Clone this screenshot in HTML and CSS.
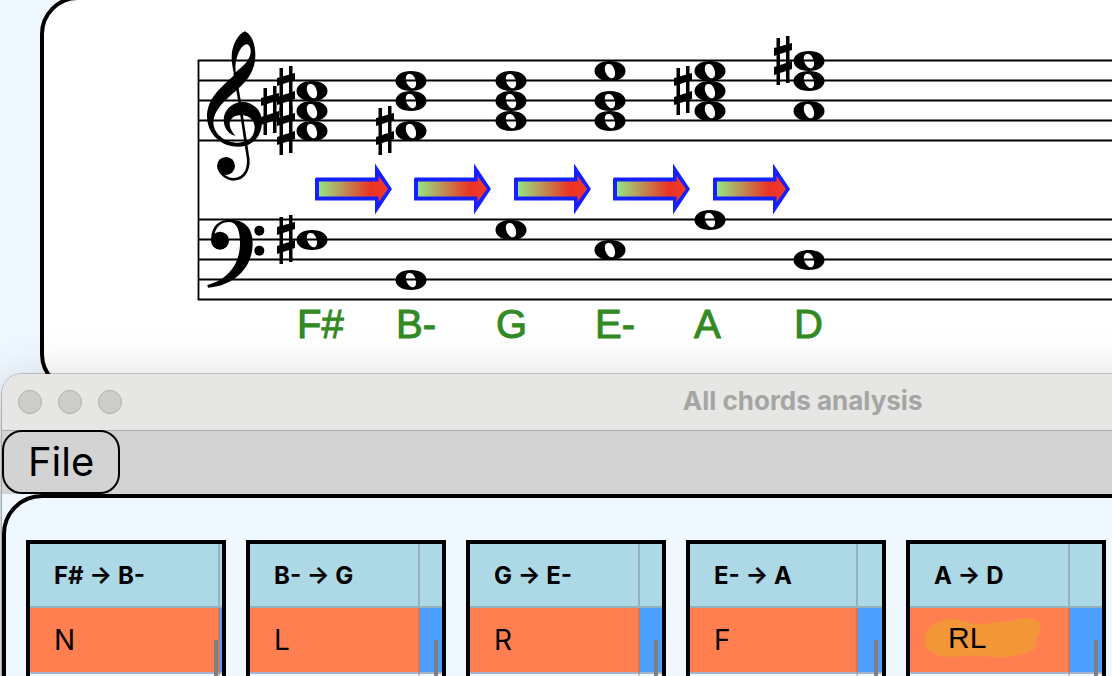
FILE: index.html
```html
<!DOCTYPE html>
<html lang="en">
<head>
    <meta charset="UTF-8">
    <meta name="viewport" content="width=device-width, initial-scale=1.0">
    <title>All chords analysis</title>
    <link rel="stylesheet" href="styles.css">
</head>
<body>
    <section class="score">
        <svg class="staff" width="1552" height="388" viewBox="44 0 1552 388" role="img" aria-label="Chord progression">
            <defs>
                <linearGradient id="fade">
                    <stop offset="0" stop-color="#94e584"/>
                    <stop offset="0.75" stop-color="#ea3323"/>
                    <stop offset="1" stop-color="#f5392b"/>
                </linearGradient>
                <path id="note" fill-rule="evenodd" d="M-15.500 0C-15.500-6-9-10 0-10S15.500-6 15.500 0 9 10 0 10-15.500 6-15.500 0ZM-2-7C-5.500-6.500-6-2-4 2.500-2 6.500 1 8 3 7 6 5.500 5.500 0 3.500-3.500 2-6.500 0-7.500-2-7Z"/>
                <path id="sharp" d="M-6.500-23h3.500v47h-3.500ZM3-25h3.500v47h-3.500ZM-9-8.500V-13L9-18V-11L-9-5ZM-9 6 9 0v8L-9 14Z"/>
                <g id="arrow">
                    <path fill="#1420ff" d="M316 177.500H375V163.500L392 189 375 214.500V200.500H315V178.500Z"/>
                    <path fill="url(#fade)" d="M319 181.500H378.500V176L388 189 378.500 202V196.500H319Z"/>
                </g>
            </defs>

            <!-- staff lines -->
            <g stroke="#000" stroke-width="1.800" fill="none">
                <path d="M198 60.500H1600M198 80.500H1600M198 100.500H1600M198 120.500H1600M198 140.500H1600"/>
                <path d="M198 219.500H1600M198 239.500H1600M198 259.500H1600M198 279.500H1600M198 299.500H1600"/>
                <path d="M198.500 60V300"/>
            </g>

            <!-- treble clef -->
            <g transform="translate(190 20) scale(.3333)">
                <path fill-rule="evenodd" d="M165 34C145 42 124 75 125 115C126 135 129 150 133 165C90 205 52 235 51 290C53 345 95 380 145 380C190 380 216 345 216 305C216 272 190 246 158 246C125 246 101 272 101 300C102 325 115 342 136 348C128 337 119 325 119 312C119 295 135 285 155 285C180 287 194 302 194 322C194 350 175 368 145 368C102 368 70 340 70 305C72 270 105 240 138 212C175 180 196 150 196 105C196 70 185 45 165 34ZM137 157C133 120 150 75 170 73C182 75 186 95 178 112C168 135 150 145 137 157Z"/>
                <path fill="none" stroke="#000" stroke-width="8" d="M134 160L148 240L172 400C182 445 165 478 130 478C112 478 95 465 88 450"/>
                <circle cx="108" cy="438" r="27"/>
            </g>

            <!-- bass clef -->
            <g transform="translate(190 160) scale(.3333)">
                <path d="M64 240C62 200 85 179 120 179C165 179 188 205 188 250C188 325 130 378 54 383L52 375C115 360 150 310 150 250C150 215 142 186 118 186C95 186 78 198 73 225Z"/>
                <circle cx="90" cy="242" r="27"/>
                <circle cx="208" cy="212" r="15"/>
                <circle cx="208" cy="272" r="15"/>
            </g>

            <!-- F# -->
            <use href="#sharp" x="286" y="91"/>
            <use href="#sharp" x="270" y="111"/>
            <use href="#sharp" x="286" y="131"/>
            <use href="#note" x="312" y="91"/>
            <use href="#note" x="312" y="111"/>
            <use href="#note" x="312" y="131"/>
            <use href="#sharp" x="286" y="240"/>
            <use href="#note" x="312" y="240"/>

            <!-- B- -->
            <use href="#sharp" x="385" y="131"/>
            <use href="#note" x="411" y="81"/>
            <use href="#note" x="411" y="101"/>
            <use href="#note" x="411" y="131"/>
            <use href="#note" x="411" y="280"/>

            <!-- G -->
            <use href="#note" x="511" y="81"/>
            <use href="#note" x="511" y="101"/>
            <use href="#note" x="511" y="121"/>
            <use href="#note" x="511" y="230"/>

            <!-- E- -->
            <use href="#note" x="610" y="71"/>
            <use href="#note" x="610" y="101"/>
            <use href="#note" x="610" y="121"/>
            <use href="#note" x="610" y="250"/>

            <!-- A -->
            <use href="#sharp" x="683" y="91"/>
            <use href="#note" x="710" y="71"/>
            <use href="#note" x="710" y="91"/>
            <use href="#note" x="710" y="111"/>
            <use href="#note" x="710" y="220"/>

            <!-- D -->
            <use href="#sharp" x="783" y="61"/>
            <use href="#note" x="809" y="61"/>
            <use href="#note" x="809" y="81"/>
            <use href="#note" x="809" y="111"/>
            <use href="#note" x="809" y="260"/>

            <use href="#arrow"/>
            <use href="#arrow" x="99"/>
            <use href="#arrow" x="199"/>
            <use href="#arrow" x="298"/>
            <use href="#arrow" x="398"/>

            <g class="chord-names">
                <text x="297" y="338">F#</text>
                <text x="396" y="338">B-</text>
                <text x="496" y="338">G</text>
                <text x="595" y="338">E-</text>
                <text x="694" y="338">A</text>
                <text x="794" y="338">D</text>
            </g>
        </svg>
    </section>

    <main class="window">
        <header class="titlebar">
            <div class="lights">
                <span></span>
                <span></span>
                <span></span>
            </div>
            <h1>All chords analysis</h1>
        </header>

        <nav class="menubar">
            <button type="button">File</button>
        </nav>

        <section class="panel">
            <div class="card">
                <table>
                    <colgroup><col class="col-190"><col></colgroup>
                    <thead><tr><th>F# → B-</th><th></th></tr></thead>
                    <tbody>
                        <tr class="match"><td>N</td><td></td></tr>
                        <tr><td></td><td></td></tr>
                    </tbody>
                </table>
            </div>
            <div class="card">
                <table>
                    <colgroup><col class="col-170"><col></colgroup>
                    <thead><tr><th>B- → G</th><th></th></tr></thead>
                    <tbody>
                        <tr class="match"><td>L</td><td></td></tr>
                        <tr><td></td><td></td></tr>
                    </tbody>
                </table>
            </div>
            <div class="card">
                <table>
                    <colgroup><col class="col-170"><col></colgroup>
                    <thead><tr><th>G → E-</th><th></th></tr></thead>
                    <tbody>
                        <tr class="match"><td>R</td><td></td></tr>
                        <tr><td></td><td></td></tr>
                    </tbody>
                </table>
            </div>
            <div class="card">
                <table>
                    <colgroup><col class="col-168"><col></colgroup>
                    <thead><tr><th>E- → A</th><th></th></tr></thead>
                    <tbody>
                        <tr class="match"><td>F</td><td></td></tr>
                        <tr><td></td><td></td></tr>
                    </tbody>
                </table>
            </div>
            <div class="card">
                <table>
                    <colgroup><col class="col-160"><col></colgroup>
                    <thead><tr><th>A → D</th><th></th></tr></thead>
                    <tbody>
                        <tr class="match">
                            <td class="marked">
                                <svg class="marker" width="118" height="40" viewBox="0 0 118 40" aria-hidden="true">
                                    <path fill="#f29638" d="M2 14C8 7 16 1 27 1C38 1 44 6 55 6C68 5 76 4 86 3C95 1 104-1 112 2C118 5 118 11 114 17C111 21 114 25 111 30C107 36 98 36 91 38C80 41 71 40 60 38C49 37 39 38 29 39C17 39 7 36 2 29C-1 25 1 20 2 14Z"/>
                                </svg>
                                <span>RL</span>
                            </td>
                            <td></td>
                        </tr>
                        <tr><td></td><td></td></tr>
                    </tbody>
                </table>
            </div>
        </section>
    </main>
</body>
</html>
```
FILE: styles.css
```css
* {
    box-sizing: border-box;
}

body {
    margin: 0;
    height: 100vh;
    overflow: hidden;
    display: flow-root;
    background: #f0f8ff;
    font-family: Inter, sans-serif;
    color: #000;
}

/* score */
.score {
    width: 144%;
    margin: -4px 0 0 40px;
    border: 4px solid #000;
    border-radius: 38px;
    background: #fff;
    overflow: hidden;
}

.staff {
    display: block;
}

.chord-names {
    font-family: "Liberation Sans", sans-serif;
    font-size: 40px;
    fill: #348a22;
    stroke: #348a22;
    stroke-width: 1px;
}

/* analysis window */
.window {
    position: relative;
    width: 144%;
    margin: -18px 0 0 2px;
    border-radius: 20px 20px 0 0;
    background: #f0f8ff;
    box-shadow: 0 0 0 1px rgba(0, 0, 0, 0.2), 0 20px 60px rgba(0, 0, 0, 0.3);
}

.titlebar {
    display: grid;
    grid-template-columns: 1fr auto 1fr;
    align-items: center;
    height: 57px;
    padding: 0 16px;
    border-bottom: 1px solid #ababab;
    border-radius: 20px 20px 0 0;
    background: #e6e6e4;
}

.lights {
    display: flex;
    gap: 16px;
}

.lights span {
    width: 24px;
    height: 24px;
    border: 1px solid #b0b0ae;
    border-radius: 50%;
    background: #cdcdcb;
}

.titlebar h1 {
    margin: 0;
    font-size: 26px;
    line-height: 30px;
    padding-bottom: 2px;
    font-weight: 700;
    color: #a5a5a3;
}

.menubar {
    display: flex;
    background: #d3d3d3;
}

.menubar button {
    height: 64px;
    margin-top: -1px;
    padding: 0 24px;
    border: 2px solid #000;
    border-radius: 20px;
    background: #d3d3d3;
    color: #000;
    font-family: inherit;
    font-size: 40px;
    line-height: 48px;
}

.panel {
    display: flex;
    gap: 20px;
    padding: 42px 20px;
    border: 4px solid #000;
    border-radius: 40px;
}

.card {
    position: relative;
    flex: none;
    width: 200px;
    border: 4px solid #000;
}

/* scroll thumb */
.card::after {
    content: "";
    position: absolute;
    top: 96px;
    right: 4px;
    bottom: 0;
    width: 4px;
    background: #7f7f7f;
}

table {
    width: 100%;
    table-layout: fixed;
    border-collapse: separate;
    border-spacing: 0;
}

.col-190 {
    width: 190px;
}

.col-170 {
    width: 170px;
}

.col-168 {
    width: 168px;
}

.col-160 {
    width: 160px;
}

th,
td {
    height: 66px;
    padding: 0;
    text-align: left;
    white-space: nowrap;
    border-bottom: 2px solid #a3b3cd;
}

th {
    height: 64px;
    padding-top: 2px;
    font-size: 24px;
    line-height: 32px;
    background: #add8e6;
    border-bottom-color: #93b2bb;
}

td {
    font-size: 28px;
    line-height: 32px;
}

th:first-child,
td:first-child {
    padding-left: 24px;
    border-right: 2px solid rgba(110, 110, 110, 0.35);
}

.match td {
    background: #4d9fff;
}

.match td:first-child {
    background: #ff7f50;
}

.match .marked:first-child {
    position: relative;
    padding: 0 0 4px 38px;
    font-family: "Liberation Sans", sans-serif;
    font-size: 30px;
}

.marked span {
    position: relative;
}

/* highlighter stroke behind the result */
.marker {
    position: absolute;
    top: 10px;
    left: 14px;
}
```
